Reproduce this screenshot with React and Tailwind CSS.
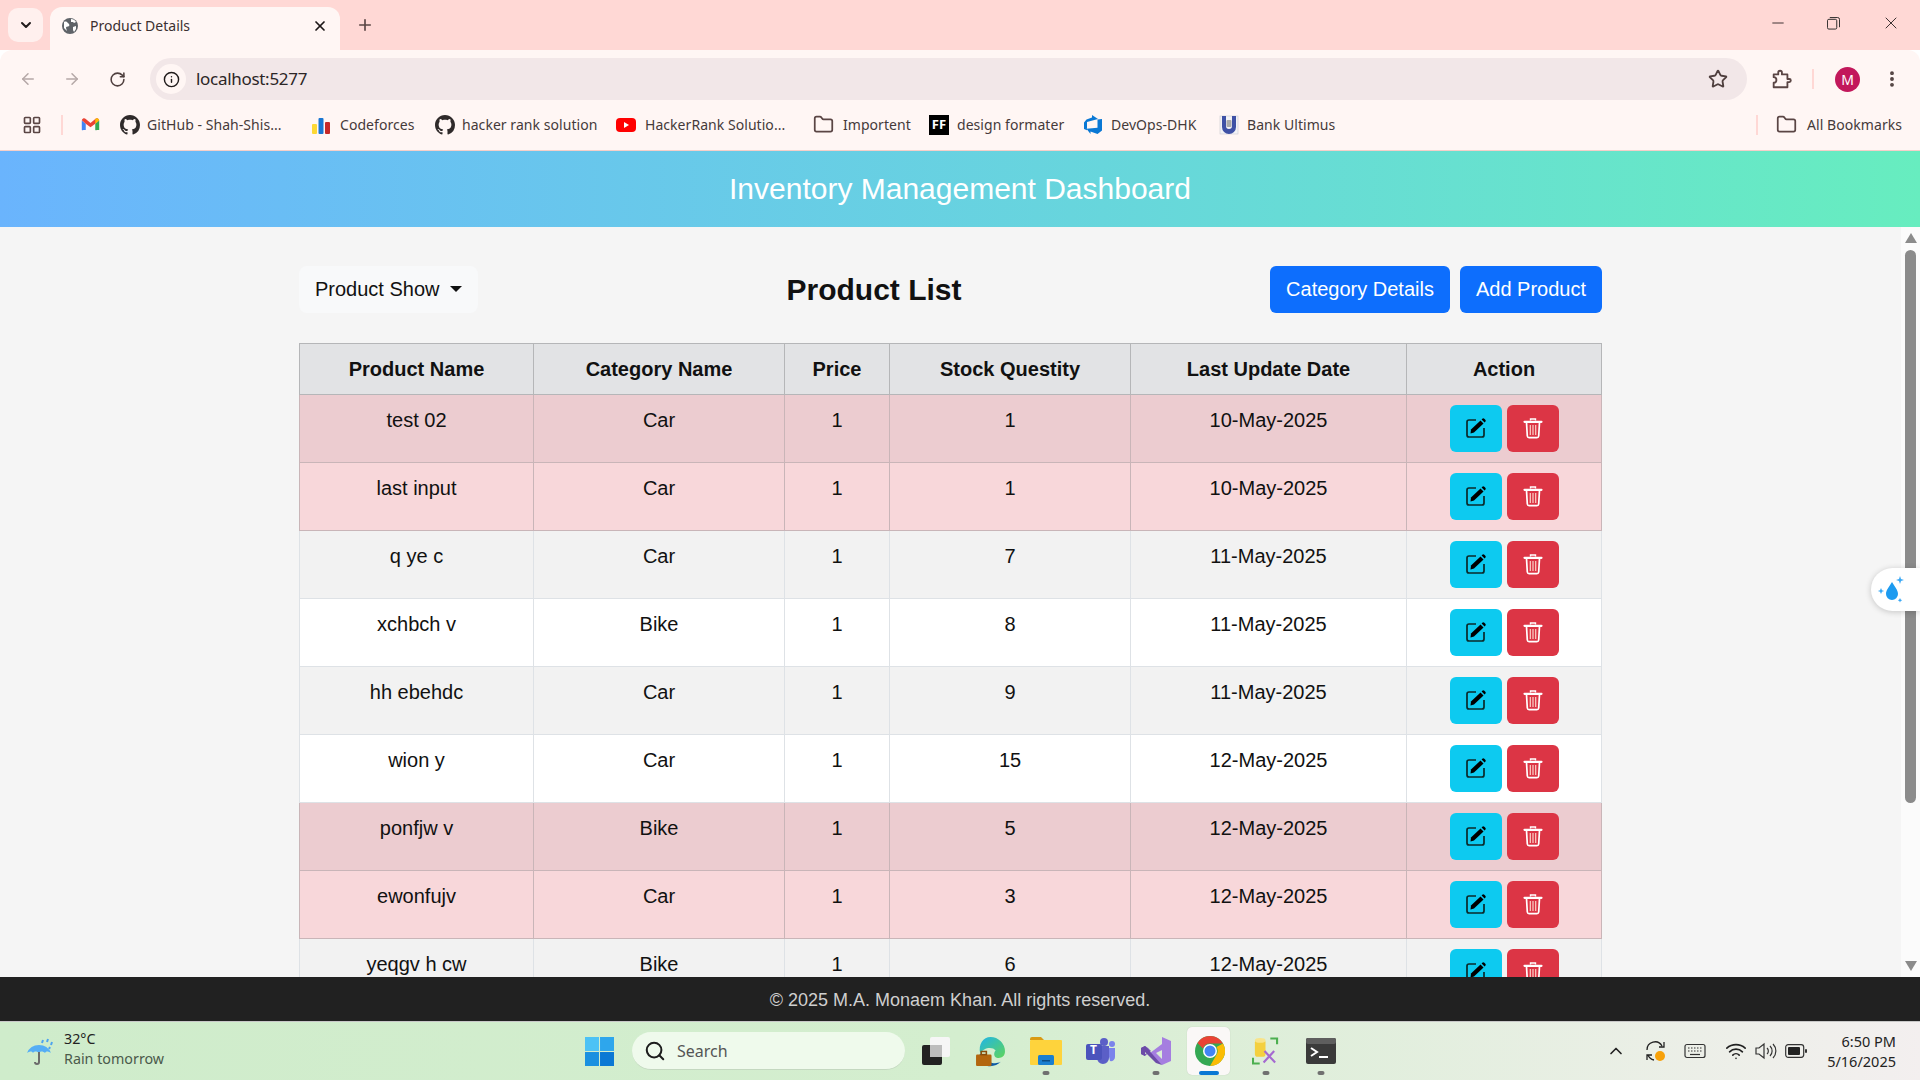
import React from "react";
import { ArrowLeft, ArrowRight, RotateCw, Info, Star, Plus, X, ChevronDown, ChevronUp, Minus, Folder, LayoutGrid, Search, Wifi, EllipsisVertical } from "lucide-react";

const GH = ({ cls }) => (
  <svg viewBox="0 0 16 16" className={cls} fill="#2f2a2a"><path d="M8 0C3.58 0 0 3.58 0 8c0 3.54 2.29 6.53 5.47 7.59.4.07.55-.17.55-.38 0-.19-.01-.82-.01-1.49-2.01.37-2.53-.49-2.69-.94-.09-.23-.48-.94-.82-1.13-.28-.15-.68-.52-.01-.53.63-.01 1.08.58 1.23.82.72 1.21 1.87.87 2.33.66.07-.52.28-.87.51-1.07-1.78-.2-3.64-.89-3.64-3.95 0-.87.31-1.59.82-2.15-.08-.2-.36-1.02.08-2.12 0 0 .67-.21 2.2.82.64-.18 1.32-.27 2-.27s1.36.09 2 .27c1.53-1.04 2.2-.82 2.2-.82.44 1.1.16 1.92.08 2.12.51.56.82 1.27.82 2.15 0 3.07-1.87 3.75-3.65 3.95.29.25.54.73.54 1.48 0 1.07-.01 1.93-.01 2.2 0 .21.15.46.55.38A8.01 8.01 0 0 0 16 8c0-4.42-3.58-8-8-8z" /></svg>
);

const rows = [
  ["test 02", "Car", "1", "1", "10-May-2025", "bg-[#ecccd0]", "border-[#c9b5b8]"],
  ["last input", "Car", "1", "1", "10-May-2025", "bg-[#f8d7da]", "border-[#c9b5b8]"],
  ["q ye c", "Car", "1", "7", "11-May-2025", "bg-[#f2f2f2]", "border-[#dee2e6]"],
  ["xchbch v", "Bike", "1", "8", "11-May-2025", "bg-white", "border-[#dee2e6]"],
  ["hh ebehdc", "Car", "1", "9", "11-May-2025", "bg-[#f2f2f2]", "border-[#dee2e6]"],
  ["wion y", "Car", "1", "15", "12-May-2025", "bg-white", "border-[#dee2e6]"],
  ["ponfjw v", "Bike", "1", "5", "12-May-2025", "bg-[#ecccd0]", "border-[#c9b5b8]"],
  ["ewonfujv", "Car", "1", "3", "12-May-2025", "bg-[#f8d7da]", "border-[#c9b5b8]"],
  ["yeqgv h cw", "Bike", "1", "6", "12-May-2025", "bg-[#f2f2f2]", "border-[#dee2e6]"],
];

const EditIcon = () => (
  <svg viewBox="0 0 24 24" className="w-[24px] h-[24px] mb-[2px]" fill="none">
    <path d="M12 4H5a2 2 0 0 0-2 2v13a2 2 0 0 0 2 2h13a2 2 0 0 0 2-2v-7" stroke="#0b2a2a" strokeWidth="1.700" />
    <path d="M7 13.500 16.500 4.500l3 3-9.500 9-3.500 1z" fill="#000" />
    <path d="M18.300 2.700a1.400 1.400 0 0 1 2 0l1 1a1.400 1.400 0 0 1 0 2l-.7.7-3-3z" fill="#000" />
  </svg>
);
const TrashIcon = () => (
  <svg viewBox="0 0 24 24" className="w-[24px] h-[24px] mb-[2px]" fill="none" stroke="#fff">
    <path d="M3.500 5.800h17" strokeWidth="2.200" strokeLinecap="round" />
    <path d="M9.500 4.500V3h5v1.500" strokeWidth="1.400" />
    <path d="M5.500 6.500 6.300 20a1.800 1.800 0 0 0 1.800 1.600h7.800a1.800 1.800 0 0 0 1.800-1.600l.8-13.500" strokeWidth="1.700" />
    <path d="M9.300 9v10M12 9v10M14.700 9v10" strokeWidth="1.200" stroke="#fbd3c8" />
  </svg>
);

const Bookmark = ({ w, icon, children, gap = "gap-[8px]" }) => (
  <div className={`flex items-center shrink-0 ${gap} ${w}`}>
    {icon}
    <span className="whitespace-nowrap">{children}</span>
  </div>
);

const Th = ({ w, children }) => (
  <th className={`${w} border border-[#b5b6b8] bg-[#e2e3e5] font-bold text-center align-middle h-[51px] p-0`}>{children}</th>
);

const TaskIcon = ({ w, ml, dot, children }) => (
  <div className={`relative shrink-0 flex items-center justify-center h-[48px] ${w} ${ml}`}>
    {children}
    {dot && <div className="absolute bottom-[0px] left-1/2 -translate-x-1/2 w-[7px] h-[4px] rounded-full bg-[#707070]" />}
  </div>
);

export default function App() {
  const uiFont = "font-['Noto_Sans',sans-serif]";
  return (
    <div className="w-[1920px] h-[1080px] overflow-hidden flex flex-col font-['Liberation_Sans',Arial,sans-serif] text-[20px] text-[#111]">
      {/* tab strip */}
      <div className={`h-[50px] shrink-0 bg-[#ffd8d5] flex items-start ${uiFont}`}>
        <div className="ml-[8px] mt-[8px] w-[35px] h-[34px] rounded-[10px] bg-[#fff0ee] flex items-center justify-center">
          <ChevronDown className="w-[16px] h-[16px] text-[#221c1c]" strokeWidth={3} />
        </div>
        <div className="ml-[7px] mt-[7px] w-[290px] h-[43px] rounded-t-[12px] bg-[#fff6f4] flex items-center pb-[6px]">
          <svg viewBox="0 0 16 16" className="ml-[12px] w-[16px] h-[16px]">
            <circle cx="8" cy="8" r="8" fill="#5f6368" />
            <path d="M2 4c2-1 3 0 4 1s2 2 1 3-3 0-3 2l1 3-3-3zM9 1c2 0 4 1 5 3l-2 1-1-1-2 0zM11 9l3-1 0 3-2 3-1-2z" fill="#fff" />
          </svg>
          <span className="ml-[12px] text-[14px] text-[#3b3030]">Product Details</span>
          <X className="ml-auto mr-[12px] w-[16px] h-[16px] text-[#1d1717]" strokeWidth={2.6} />
        </div>
        <Plus className="ml-[16px] mt-[16px] w-[18px] h-[18px] text-[#5a4544]" strokeWidth={2.2} />
        <div className="ml-auto flex items-center h-[46px] text-[#2a2222]">
          <Minus className="w-[18px] h-[18px]" strokeWidth={1.2} />
          <svg viewBox="0 0 14 14" className="ml-[40px] w-[13px] h-[13px]" fill="none" stroke="#222" strokeWidth="1">
            <rect x="0.500" y="2.500" width="10" height="10.500" rx="1.500" />
            <path d="M3 .6h8.500a2 2 0 0 1 2 2V11" />
          </svg>
          <X className="ml-[41px] mr-[19px] w-[20px] h-[20px]" strokeWidth={1.1} />
        </div>
      </div>

      {/* toolbar */}
      <div className={`h-[50px] shrink-0 bg-[#fff6f4] flex items-center rounded-t-[12px] pt-[8px] ${uiFont}`}>
        <ArrowLeft className="ml-[19px] w-[18px] h-[18px] text-[#b5a8a7]" strokeWidth={2} />
        <ArrowRight className="ml-[26px] w-[18px] h-[18px] text-[#b5a8a7]" strokeWidth={2} />
        <RotateCw className="ml-[28px] w-[17px] h-[17px] text-[#4f3f3e]" strokeWidth={2.200} />
        <div className="ml-[24px] w-[1597px] h-[42px] rounded-full bg-[#f2e7e8] flex items-center">
          <div className="ml-[6px] w-[30px] h-[30px] rounded-full bg-[#fff6f4] flex items-center justify-center">
            <Info className="w-[17px] h-[17px] text-[#1f1a1a]" strokeWidth={2} />
          </div>
          <span className="ml-[10px] text-[17px] tracking-[-0.3px] text-[#2c2626]">localhost:5277</span>
          <Star className="ml-auto mr-[19px] w-[20px] h-[20px] text-[#4f3f3e]" strokeWidth={2.200} />
        </div>
        <svg viewBox="0 0 24 24" className="ml-[23px] w-[22px] h-[22px]" fill="none" stroke="#5a4544" strokeWidth="2">
          <path d="M4 7h5V5a2 2 0 0 1 4 0v2h6v5h2a1.600 1.600 0 0 1 0 3.400h-2V21H4v-5a3 3 0 0 0 0-6z" strokeLinejoin="round" />
        </svg>
        <div className="ml-[20px] w-[2px] h-[20px] bg-[#ffd8d5]" />
        <div className="ml-[21px] w-[25px] h-[25px] rounded-full bg-[#c2185b] flex items-center justify-center text-white text-[14px]">M</div>
        <EllipsisVertical className="ml-[22px] w-[20px] h-[20px] text-[#4f3f3e]" strokeWidth={2.600} />
      </div>

      {/* bookmarks */}
      <div className={`h-[51px] shrink-0 bg-[#fff6f4] border-b border-[#f5cfc9] flex items-center text-[14px] tracking-[0.05px] text-[#453a3a] pb-[1px] ${uiFont}`}>
        <LayoutGrid className="ml-[22px] w-[20px] h-[20px] text-[#5a4544]" strokeWidth={2} />
        <div className="ml-[19px] w-[2px] h-[20px] bg-[#ffd8d5]" />
        <svg viewBox="0 0 24 18" className="ml-[18px] w-[19px] h-[15px] shrink-0">
          <path d="M1 4v12a2 2 0 0 0 2 0h3V8z" fill="#4285f4" />
          <path d="M23 4v12h-3a2 2 0 0 1-2 0V8z" fill="#34a853" />
          <path d="M1 3.500 6 8l6 4.500L18 8l5-4.500C22 1 19.500 .5 18 2l-6 5-6-5C4.500 .5 2 1 1 3.500z" fill="#ea4335" />
          <path d="M18 2v6l5-4.500C22 1 19.500 .5 18 2z" fill="#fbbc04" />
        </svg>
        <div className="ml-[20px] w-[191px] shrink-0"><Bookmark icon={<GH cls="w-[20px] h-[20px]" />} gap="gap-[7px]">GitHub - Shah-Shis...</Bookmark></div>
        <div className="w-[124px] shrink-0">
          <Bookmark icon={
            <svg viewBox="0 0 20 20" className="w-[20px] h-[20px]">
              <rect x="1" y="9" width="5" height="10" rx="1" fill="#fdd835" />
              <rect x="7.500" y="3" width="5" height="16" rx="1" fill="#1976d2" />
              <rect x="14" y="7" width="5" height="12" rx="1" fill="#c62828" />
            </svg>} gap="gap-[9px]">Codeforces</Bookmark>
        </div>
        <div className="w-[181px] shrink-0"><Bookmark icon={<GH cls="w-[20px] h-[20px]" />} gap="gap-[7px]">hacker rank solution</Bookmark></div>
        <div className="w-[197px] shrink-0">
          <Bookmark icon={
            <svg viewBox="0 0 20 14" className="w-[20px] h-[14px]">
              <rect width="20" height="14" rx="4" fill="#f00" />
              <path d="M8 4l5 3-5 3z" fill="#fff" />
            </svg>} gap="gap-[9px]">HackerRank Solutio...</Bookmark>
        </div>
        <div className="w-[116px] shrink-0"><Bookmark icon={<Folder className="w-[21px] h-[21px] text-[#5a4544]" strokeWidth={2} />} gap="gap-[9px]">Importent</Bookmark></div>
        <div className="w-[154px] shrink-0">
          <Bookmark icon={
            <span className="w-[20px] h-[20px] bg-black text-white font-bold text-[13px] flex items-center justify-center tracking-[0px]">FF</span>} gap="gap-[8px]">design formater</Bookmark>
        </div>
        <div className="w-[136px] shrink-0">
          <Bookmark icon={
            <svg viewBox="0 0 20 20" className="w-[20px] h-[20px]">
              <path d="M19 4v11.500l-4.500 3.500-7-2.500v2.500l-4-5.200 11-1V4.500zM15 4 9 0v2.500L3.500 4.500 1 7.500v6.500l3 1.300V7z" fill="#0a78d4" />
            </svg>} gap="gap-[8px]">DevOps-DHK</Bookmark>
        </div>
        <div className="shrink-0">
          <Bookmark icon={
            <svg viewBox="0 0 20 20" className="w-[20px] h-[20px]">
              <rect x="1" y="1" width="18" height="18" fill="#f3f3f6" stroke="#c9c9d2" strokeWidth="0.600" />
              <path d="M3 1h4v10a3 3 0 0 0 6 0V1h4v11a7 7 0 0 1-14 0z" fill="#3f51a5" />
              <rect x="7.500" y="5" width="5" height="7" rx="1" fill="#aaa" />
            </svg>} gap="gap-[8px]">Bank Ultimus</Bookmark>
        </div>
        <div className="ml-auto flex items-center mr-[18px]">
          <div className="w-[2px] h-[20px] bg-[#ffd8d5] mr-[18px]" />
          <Folder className="w-[21px] h-[21px] text-[#5a4544] mr-[10px]" strokeWidth={2} />
          <span>All Bookmarks</span>
        </div>
      </div>

      {/* page header */}
      <div className="h-[76px] shrink-0 bg-gradient-to-r from-[#6ab4fd] to-[#67edbf] flex items-center justify-center text-white text-[30px] pb-[1px]">
        Inventory Management Dashboard
      </div>

      {/* scrolling region */}
      <div className="relative h-[750px] shrink-0 flex overflow-hidden bg-[#f5f5f5]">
        <div className="flex-1 overflow-hidden">
          <div className="w-[1303px] mx-auto pt-[39px]">
            <div className="flex items-center justify-between h-[47px]">
              <button className="h-[47px] w-[179px] rounded-[8px] bg-[#f8f9fa] flex items-center pl-[16px] pb-[2px] text-[#111]">
                Product Show
                <span className="ml-[10px] w-0 h-0 border-x-[6px] border-x-transparent border-t-[6px] border-t-[#111]" />
              </button>
              <h3 className="text-[30px] font-bold">Product List</h3>
              <div className="flex gap-[10px]">
                <button className="h-[47px] w-[180px] rounded-[6px] bg-[#0d6efd] text-white pb-[2px]">Category Details</button>
                <button className="h-[47px] w-[142px] rounded-[6px] bg-[#0d6efd] text-white pb-[2px]">Add Product</button>
              </div>
            </div>
            <table className="mt-[30px] w-[1302px] table-fixed border-collapse">
              <thead>
                <tr>
                  <Th w="w-[234px]">Product Name</Th>
                  <Th w="w-[251px]">Category Name</Th>
                  <Th w="w-[105px]">Price</Th>
                  <Th w="w-[241px]">Stock Questity</Th>
                  <Th w="w-[276px]">Last Update Date</Th>
                  <Th w="w-[195px]">Action</Th>
                </tr>
              </thead>
              <tbody>
                {rows.map((r, i) => (
                  <tr key={i} className={r[5]}>
                    {r.slice(0, 5).map((c, j) => (
                      <td key={j} className={`border ${r[6]} text-center align-top h-[68px] p-0 pt-[10px] leading-[30px]`}>{c}</td>
                    ))}
                    <td className={`border ${r[6]} align-top h-[68px] p-0 pt-[10px]`}>
                      <div className="flex justify-center gap-[5px]">
                        <button className="w-[52px] h-[47px] rounded-[6px] bg-[#0dcaf0] flex items-center justify-center"><EditIcon /></button>
                        <button className="w-[52px] h-[47px] rounded-[6px] bg-[#dc3545] flex items-center justify-center"><TrashIcon /></button>
                      </div>
                    </td>
                  </tr>
                ))}
              </tbody>
            </table>
          </div>
        </div>
        {/* scrollbar */}
        <div className="w-[19px] shrink-0 bg-[#fbfbfb] flex flex-col items-center pt-[6px] pb-[6px]">
          <div className="w-0 h-0 border-x-[6px] border-x-transparent border-b-[10px] border-b-[#8b8b8b]" />
          <div className="mt-[7px] w-[11px] h-[553px] rounded-full bg-[#8b8b8b]" />
          <div className="mt-auto w-0 h-0 border-x-[6px] border-x-transparent border-t-[10px] border-t-[#8b8b8b]" />
        </div>
        {/* floating widget */}
        <div className="absolute right-0 top-[341px] w-[49px] h-[43px] rounded-l-full bg-white shadow-[0_1px_6px_rgba(0,0,0,0.2)] flex items-center pl-[5px]">
          <svg viewBox="0 0 32 32" className="w-[32px] h-[32px]">
            <path d="M16 8c-3 5-6 8-6 12a6 6 0 0 0 12 0c0-4-3-7-6-12z" fill="#1d9bf0" />
            <path d="M5 14l1 2.200 2.200.8-2.200.8-1 2.200-1-2.200-2.200-.8 2.200-.8zM24 2l1 3 3 1-3 1-1 3-1-3-3-1 3-1zM24 24l.7 1.500 1.500.7-1.500.7-.7 1.500-.7-1.500-1.500-.7 1.500-.7z" fill="#3aa8f5" />
          </svg>
        </div>
      </div>

      {/* footer */}
      <div className="h-[44px] shrink-0 bg-[#212121] flex items-center justify-center text-[18px] text-[#cfcfcf] pt-[2px]">
        © 2025 M.A. Monaem Khan. All rights reserved.
      </div>

      {/* taskbar */}
      <div className={`h-[59px] shrink-0 border-t border-[#c8c8c8] bg-gradient-to-r from-[#cfeccb] via-[#d4eecf] via-50% to-[#f3efef] flex items-center ${uiFont}`}>
        <svg viewBox="0 0 32 32" className="ml-[24px] w-[32px] h-[32px] shrink-0">
          <path d="M3 18a13 13 0 0 1 24 0c-3-2-5-2-6 0-2-2-5-2-6 0-2-2-5-2-6 0-1-2-3-2-6 0z" fill="#55aef5" />
          <path d="M15 17v10a2 2 0 0 1-4 0" fill="none" stroke="#6b6b6b" strokeWidth="2" />
          <path d="M19 5l-1 3M24 4l-1 3M28 7l-1 3M26 12l-1 2" stroke="#4da3ef" strokeWidth="2" />
        </svg>
        <div className="ml-[8px] w-[100px] shrink-0 flex flex-col text-[14.3px] leading-[20px] pb-[4px]">
          <span className="text-[#222]">32°C</span>
          <span className="text-[#4b5a4b] whitespace-nowrap">Rain tomorrow</span>
        </div>
        <svg viewBox="0 0 28 28" className="ml-[421px] w-[29px] h-[29px] shrink-0">
          <rect x="0" y="0" width="13.500" height="13.500" fill="#4cc2f5" />
          <rect x="14.500" y="0" width="13.500" height="13.500" fill="#2ea6ec" />
          <rect x="0" y="14.500" width="13.500" height="13.500" fill="#1a90e0" />
          <rect x="14.500" y="14.500" width="13.500" height="13.500" fill="#0a78d4" />
        </svg>
        <div className="ml-[18px] w-[273px] h-[38px] shrink-0 rounded-full bg-[#effaec] border-b border-[#c4d8c0] flex items-center">
          <Search className="ml-[12px] w-[22px] h-[22px] text-[#1d1d1d]" strokeWidth={2.200} />
          <span className="ml-[11px] text-[16px] text-[#555]">Search</span>
        </div>
        <TaskIcon w="w-[30px]" ml="ml-[16px]">
          <svg viewBox="0 0 30 30" className="w-[30px] h-[30px]">
            <rect x="9" y="1" width="20" height="20" rx="2" fill="#f6f6f6" />
            <rect x="1" y="9" width="20" height="20" rx="2" fill="#222" />
            <rect x="9" y="9" width="12" height="12" fill="#bdbdbd" />
          </svg>
        </TaskIcon>
        <TaskIcon w="w-[31px]" ml="ml-[24px]">
          <svg viewBox="0 0 30 30" className="w-[31px] h-[31px]">
            <defs><linearGradient id="ed" x1="0" y1="0" x2="1" y2="1"><stop offset="0" stopColor="#1fb5e8" /><stop offset="1" stopColor="#5fd45a" /></linearGradient></defs>
            <path d="M15 1a14 14 0 0 1 14 14c0 5-4 7-8 6-3-1-3-5-1-7-3-4-12-3-15 3C3 8 8 1 15 1z" fill="url(#ed)" />
            <path d="M5 17c-3 5 0 11 7 12 5 1 10-1 13-4-6 3-12 1-14-4z" fill="#0c59a4" />
            <rect x="1" y="18" width="15" height="11" rx="1" fill="#b3660f" />
            <rect x="6" y="15" width="5" height="3" fill="none" stroke="#8a4d0b" strokeWidth="1.500" />
          </svg>
        </TaskIcon>
        <TaskIcon w="w-[32px]" ml="ml-[24px]" dot>
          <svg viewBox="0 0 32 30" className="w-[32px] h-[30px]">
            <path d="M0 3a2 2 0 0 1 2-2h9l3 3h-14z" fill="#d99a13" />
            <rect x="0" y="4" width="32" height="25" rx="1" fill="#fed33c" />
            <rect x="8" y="19" width="16" height="10" rx="1.500" fill="#1a7fd0" />
            <rect x="12" y="24" width="8" height="1.500" fill="#0c4d85" />
          </svg>
        </TaskIcon>
        <TaskIcon w="w-[30px]" ml="ml-[24px]">
          <svg viewBox="0 0 30 30" className="w-[30px] h-[30px]">
            <circle cx="18" cy="6" r="4" fill="#5b5fc7" />
            <circle cx="26" cy="8" r="3" fill="#7b83eb" />
            <path d="M21 12h8v9a4 4 0 0 1-5 4z" fill="#7b83eb" />
            <path d="M9 10h14v12a6 6 0 0 1-12 0z" fill="#5b5fc7" />
            <rect x="0" y="8" width="16" height="16" rx="2" fill="#4b53bc" />
          </svg>
          <span className="absolute left-[4px] top-[16px] text-white text-[12px] font-bold leading-[14px]">T</span>
        </TaskIcon>
        <TaskIcon w="w-[30px]" ml="ml-[25px]" dot>
          <svg viewBox="0 0 30 30" className="w-[30px] h-[30px]">
            <path d="M21 1l9 4v20l-9 4-12-12 12-9v6l-6 3 6 6z" fill="#a57ee0" />
            <path d="M21 1 7 17l-3 3-4-2V12l4-2 3 2 3 3-3 2-3-2v3l3-1L21 1z" fill="#7a56b5" />
            <path d="M0 12l4-2 17 19-6-2L4 16v4l-4-2z" fill="#6c4ba8" />
          </svg>
        </TaskIcon>
        <TaskIcon w="w-[43px]" ml="ml-[16px]">
          <div className="absolute inset-0 rounded-[5px] bg-[#faf8f7] shadow-[0_0_1px_rgba(0,0,0,0.2)]" />
          <svg viewBox="0 0 30 30" className="relative w-[30px] h-[30px] ml-[2px]">
            <circle cx="15" cy="15" r="15" fill="#34a853" />
            <path d="M15 0a15 15 0 0 1 13 7.500H15a7.500 7.500 0 0 0-7 5L2.500 7A15 15 0 0 1 15 0z" fill="#ea4335" />
            <path d="M28 7.500A15 15 0 0 1 15 30l6.500-11.200A7.500 7.500 0 0 0 21.500 11z" fill="#fbbc04" />
            <circle cx="15" cy="15" r="7" fill="#fff" />
            <circle cx="15" cy="15" r="5.500" fill="#4285f4" />
          </svg>
          <div className="absolute bottom-[0px] left-1/2 -translate-x-1/2 w-[20px] h-[4px] rounded-full bg-[#0a78d4]" />
        </TaskIcon>
        <TaskIcon w="w-[27px]" ml="ml-[22px]" dot>
          <svg viewBox="0 0 28 30" className="w-[27px] h-[30px]">
            <rect x="3" y="3" width="11" height="18" rx="3" fill="#f4d03f" />
            <ellipse cx="8.500" cy="4" rx="5.500" ry="2.500" fill="#f8e48a" />
            <path d="M19 2h7v6M1 22v6h7" fill="none" stroke="#4caf50" strokeWidth="2.200" />
            <path d="M12 27l11-12M24 27 13 15" stroke="#a56ad0" strokeWidth="2.200" />
          </svg>
        </TaskIcon>
        <TaskIcon w="w-[30px]" ml="ml-[27px]" dot>
          <svg viewBox="0 0 30 30" className="w-[30px] h-[30px]">
            <rect x="0" y="2" width="30" height="26" rx="2" fill="#3a3a3a" />
            <rect x="0" y="2" width="30" height="6" rx="2" fill="#5e5e5e" />
            <path d="M5 12l6 4-6 4" stroke="#fff" strokeWidth="2" fill="none" />
            <rect x="13" y="20" width="9" height="2" fill="#fff" />
          </svg>
        </TaskIcon>
        <ChevronUp className="ml-[270px] w-[20px] h-[20px] text-[#222] shrink-0" strokeWidth={2} />
        <svg viewBox="0 0 24 24" className="ml-[18px] w-[24px] h-[24px] shrink-0" fill="none" stroke="#222" strokeWidth="1.300">
          <path d="M3 11a8 8 0 0 1 15-4M20 3v5h-5M3 21v-5h5M4 16a8 8 0 0 0 6 5" />
          <circle cx="16" cy="17" r="5" fill="#f7a10a" stroke="none" />
        </svg>
        <svg viewBox="0 0 22 16" className="ml-[16px] w-[22px] h-[16px] shrink-0" fill="none" stroke="#333" strokeWidth="1.200">
          <rect x="1" y="1.500" width="20" height="13" rx="2" />
          <path d="M4 5h14M4 8h14" strokeDasharray="1.500 1.500" />
          <path d="M6 11.500h10" />
        </svg>
        <Wifi className="ml-[19px] w-[22px] h-[22px] text-[#222] shrink-0" strokeWidth={1.800} />
        <svg viewBox="0 0 22 20" className="ml-[8px] w-[22px] h-[20px] shrink-0" fill="none" stroke="#333" strokeWidth="1.200">
          <path d="M1 7v6h3l5 4V3L4 7z" />
          <path d="M12 7a4 4 0 0 1 0 6M15 5a7 7 0 0 1 0 10M18 3a10 10 0 0 1 0 14" />
        </svg>
        <svg viewBox="0 0 22 14" className="ml-[8px] w-[22px] h-[14px] shrink-0">
          <rect x="0.700" y="0.700" width="18" height="12.600" rx="2.500" fill="none" stroke="#333" strokeWidth="1.200" />
          <rect x="3" y="3" width="12" height="8" rx="1" fill="#222" />
          <rect x="20" y="5" width="2" height="4" rx="1" fill="#333" />
        </svg>
        <div className="ml-auto mr-[24px] flex flex-col items-end text-[14.5px] leading-[20px] text-[#222]">
          <span>6:50 PM</span>
          <span>5/16/2025</span>
        </div>
      </div>
    </div>
  );
}
